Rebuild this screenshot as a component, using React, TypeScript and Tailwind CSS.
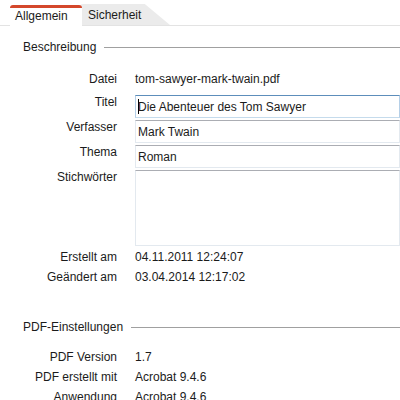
import React from 'react';

const Section = ({ title }: { title: string }) => (
  <div className="flex items-center h-[20px]">
    <span className="pl-[23px] pr-[8px]">{title}</span>
    <div className="flex-1 h-px bg-[#a0a0a0]" />
  </div>
);

const InfoRow = ({ label, value }: { label: string; value: string }) => (
  <div className="grid grid-cols-[117px_1fr] gap-x-[18px] h-[20px] items-center">
    <span className="text-right">{label}</span>
    <span>{value}</span>
  </div>
);

const FieldRow = ({
  label,
  value,
  focused = false,
  tall = false,
}: {
  label: string;
  value?: string;
  focused?: boolean;
  tall?: boolean;
}) => (
  <div className="grid grid-cols-[117px_1fr] gap-x-[18px]">
    <span className="text-right leading-[14px]">{label}</span>
    <div
      className={`border pl-[2px] flex ${tall ? 'h-[76px] items-start' : 'h-[23px] items-center'} ${
        focused
          ? 'border-[#5d8ebb] border-b-[#c5dbec] border-x-[#b5cfe7]'
          : 'border-[#e3e9ef] border-t-[#abadb3]'
      }`}
    >
      {focused && <span className="w-px h-[15px] bg-black -mr-px" />}
      {value}
    </div>
  </div>
);

export default function App() {
  return (
    <div className="w-[400px] h-[400px] bg-white overflow-hidden text-[12px] text-[#1b1b1b] font-['Liberation_Sans',Arial,sans-serif]">
      {/* tabs */}
      <div className="relative h-[26px] border-b border-[#e3e3e3] flex items-end pl-[10px]">
        <div className="relative z-10 h-[21px] w-[72px] bg-white border-t-[3px] border-[#d4472b] rounded-tl-[3px] rounded-tr-[3px] pl-[5px] leading-[17px] -mb-px">
          Allgemein
        </div>
        <div className="h-[21px] w-[90px] bg-[#ebebeb] -ml-[2px] pl-[8px] pt-[3px] leading-[16px] rounded-tl-[3px] [clip-path:polygon(0_0,72%_0,100%_100%,0_100%)]">
          Sicherheit
        </div>
      </div>

      <div className="mt-[11px]">
        <Section title="Beschreibung" />
      </div>

      <div className="mt-[12px]">
        <InfoRow label="Datei" value="tom-sawyer-mark-twain.pdf" />
      </div>

      <div className="mt-[6px] flex flex-col gap-[2px]">
        <FieldRow label="Titel" value="Die Abenteuer des Tom Sawyer" focused />
        <FieldRow label="Verfasser" value="Mark Twain" />
        <FieldRow label="Thema" value="Roman" />
        <FieldRow label="Stichwörter" tall />
      </div>

      <div className="mt-[1px]">
        <InfoRow label="Erstellt am" value="04.11.2011 12:24:07" />
        <InfoRow label="Geändert am" value="03.04.2014 12:17:02" />
      </div>

      <div className="mt-[30px]">
        <Section title="PDF-Einstellungen" />
      </div>

      <div className="mt-[10px]">
        <InfoRow label="PDF Version" value="1.7" />
        <InfoRow label="PDF erstellt mit" value="Acrobat 9.4.6" />
        <InfoRow label="Anwendung" value="Acrobat 9.4.6" />
      </div>
    </div>
  );
}
